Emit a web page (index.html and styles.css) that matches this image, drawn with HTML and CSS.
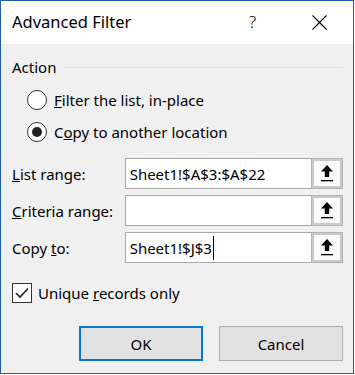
FILE: index.html
```html
<!DOCTYPE html>
<html lang="en">
<head>
    <meta charset="UTF-8">
    <title>Advanced Filter</title>
    <link rel="stylesheet" href="styles.css">
</head>
<body>

    <div class="window">
        <div class="titlebar">
            <div class="title">Advanced Filter</div>
            <div class="help">?</div>
            <div class="close">
                <svg width="15" height="15" viewBox="0 0 15 15">
                    <path d="M0.5 0.5 L14.5 14.5 M14.5 0.5 L0.5 14.5" stroke="#000" stroke-width="1.1" fill="none"/>
                </svg>
            </div>
        </div>

        <div class="content">
            <div class="group-head">
                <span>Action</span>
                <div class="group-line"></div>
            </div>

            <div class="radios">
                <div class="radio-row">
                    <span class="radio"></span>
                    <span><u>F</u>ilter the list, in-place</span>
                </div>
                <div class="radio-row">
                    <span class="radio checked"></span>
                    <span>C<u>o</u>py to another location</span>
                </div>
            </div>

            <div class="fields">
                <div class="field">
                    <div class="field-label"><u>L</u>ist range:</div>
                    <div class="input">Sheet1!$A$3:$A$22</div>
                    <div class="pick">
                        <svg width="12" height="17" viewBox="0 0 12 17">
                            <path d="M6 0 L12 6.5 L8.2 6.5 L8.2 12 L3.8 12 L3.8 6.5 L0 6.5 Z" fill="#000"/>
                            <rect x="0" y="15" width="12" height="1.3" fill="#000"/>
                        </svg>
                    </div>
                </div>
                <div class="field">
                    <div class="field-label"><u>C</u>riteria range:</div>
                    <div class="input"></div>
                    <div class="pick">
                        <svg width="12" height="17" viewBox="0 0 12 17">
                            <path d="M6 0 L12 6.5 L8.2 6.5 L8.2 12 L3.8 12 L3.8 6.5 L0 6.5 Z" fill="#000"/>
                            <rect x="0" y="15" width="12" height="1.3" fill="#000"/>
                        </svg>
                    </div>
                </div>
                <div class="field">
                    <div class="field-label">Copy <u>t</u>o:</div>
                    <div class="input">Sheet1!$J$3<span class="caret"></span></div>
                    <div class="pick">
                        <svg width="12" height="17" viewBox="0 0 12 17">
                            <path d="M6 0 L12 6.5 L8.2 6.5 L8.2 12 L3.8 12 L3.8 6.5 L0 6.5 Z" fill="#000"/>
                            <rect x="0" y="15" width="12" height="1.3" fill="#000"/>
                        </svg>
                    </div>
                </div>
            </div>

            <div class="check-row">
                <span class="checkbox">
                    <svg width="14" height="12" viewBox="0 0 14 12">
                        <path d="M1 6 L5 10 L13 1.5" stroke="#222" stroke-width="1.6" fill="none"/>
                    </svg>
                </span>
                <span>Unique <u>r</u>ecords only</span>
            </div>

            <div class="actions">
                <button class="btn default">OK</button>
                <button class="btn">Cancel</button>
            </div>
        </div>
    </div>

</body>
</html>
```

FILE: styles.css
```css
body {
    margin: 0;
    background: #fff;
    font-family: 'Noto Sans', 'Open Sans', sans-serif;
    font-size: 15px;
    color: #000;
}

.window {
    width: 352px;
    height: 372px;
    border: 1px solid #1f5eb3;
    background: #f0f0f0;
    display: flex;
    flex-direction: column;
}

.titlebar {
    height: 43px;
    background: #fff;
    display: flex;
    align-items: center;
}

.title {
    flex: 1;
    padding-left: 11px;
    padding-bottom: 2px;
    font-size: 16.5px;
}

.help {
    width: 12px;
    margin-right: 51px;
    padding-bottom: 2px;
    font-size: 17px;
    font-weight: 300;
}

.close {
    width: 15px;
    margin-right: 26px;
    display: flex;
}

.content {
    padding: 0 10px 0 11px;
}

.group-head {
    margin-top: 13px;
    height: 20px;
    display: flex;
    align-items: center;
}

.group-line {
    flex: 1;
    height: 1px;
    background: #dcdcdc;
    margin-left: 8px;
}

.radios {
    margin-top: 7px;
}

.radio-row {
    height: 32px;
    display: flex;
    align-items: center;
    padding-left: 15px;
}

.radio {
    width: 18px;
    height: 18px;
    border: 1px solid #333;
    border-radius: 50%;
    background: #fff;
    margin-right: 7px;
    display: flex;
    align-items: center;
    justify-content: center;
}

.radio.checked::after {
    content: "";
    width: 10px;
    height: 10px;
    border-radius: 50%;
    background: #222;
}

.fields {
    margin-top: 10px;
    display: flex;
    flex-direction: column;
    gap: 6px;
}

.field {
    height: 31px;
    display: flex;
    align-items: center;
}

.field-label {
    width: 113px;
}

.input {
    width: 182px;
    height: 29px;
    border: 1px solid #a8a8a8;
    border-right: none;
    background: #fff;
    display: flex;
    align-items: center;
    padding-left: 4px;
}

.caret {
    display: inline-block;
    width: 1px;
    height: 24px;
    background: #000;
    margin-left: 1px;
}

.pick {
    width: 26px;
    height: 25px;
    border: 3px solid #c9c9c9;
    outline: 1px solid #b4b4b4;
    outline-offset: -1px;
    background: #fafafa;
    display: flex;
    align-items: center;
    justify-content: center;
}

.check-row {
    margin-top: 20px;
    height: 20px;
    display: flex;
    align-items: center;
}

.checkbox {
    width: 18px;
    height: 18px;
    border: 1px solid #333;
    background: #fff;
    margin-right: 6px;
    display: flex;
    align-items: center;
    justify-content: center;
}

.actions {
    margin-top: 23px;
    display: flex;
    justify-content: flex-end;
    gap: 16px;
}

.btn {
    width: 124px;
    height: 35px;
    background: #e1e1e1;
    border: 1px solid #adadad;
    font-family: inherit;
    font-size: 15px;
    color: #000;
    padding: 0;
}

.btn.default {
    border: 2px solid #0078d7;
}
```
